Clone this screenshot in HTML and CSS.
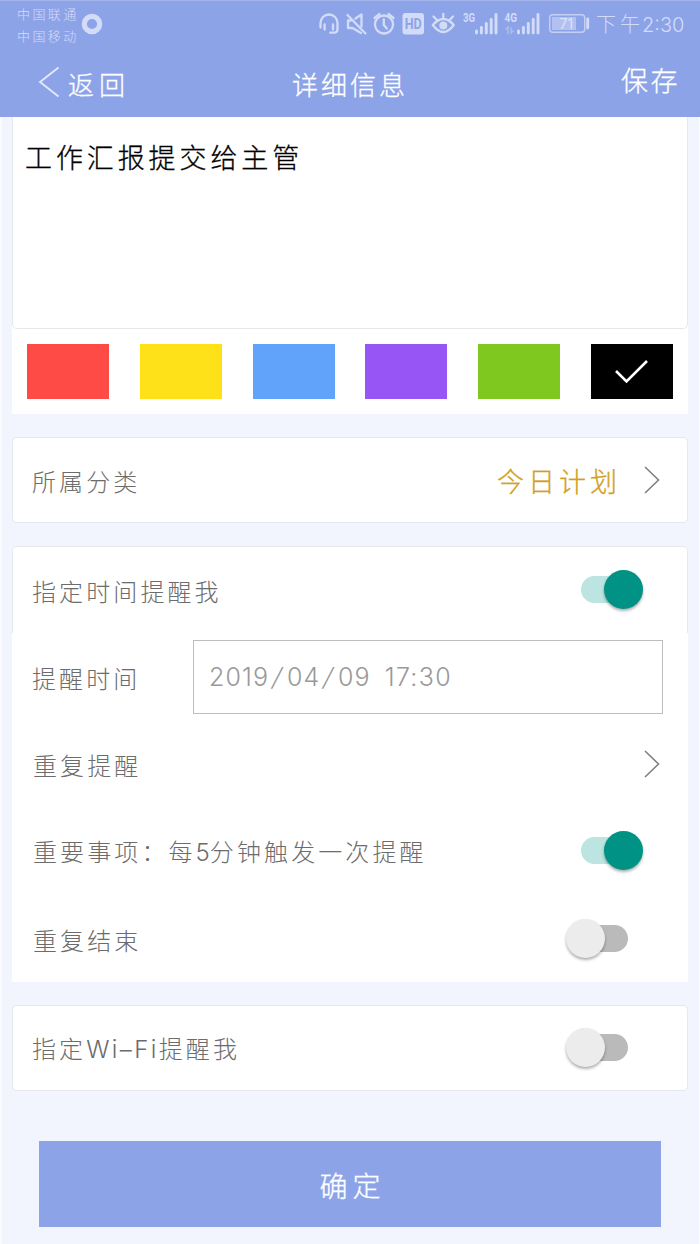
FILE: index.html
```html
<!DOCTYPE html>
<html lang="zh-CN">
<head>
<meta charset="utf-8">
<title>详细信息</title>
<link rel="stylesheet" href="styles.css">
</head>
<body>
<header class="top">
  <div class="status">
    <div class="carriers"><span>中国联通</span><span>中国移动</span></div>
    <svg class="ring" width="22" height="22" viewBox="0 0 22 22"><circle cx="11" cy="11" r="7.7"/></svg>
    <svg class="status-icons" width="278" height="36" viewBox="312 6 278 36">
      <g class="line">
        <path d="M320.500 27.500v-4.500a8.500 8.500 0 0 1 17 0v6q0 3.700-3.700 3.700h-3.600M324.600 24.500v5M333 24.500v5"/>
        <path d="M347.500 15l18 18.500M351 20.500h-3v7.500h4.500l8.500 5M355.500 18.500l6-4v12"/>
        <circle cx="384" cy="24.500" r="9"/><path d="M383.800 19.500v5.500l3 3.500M374.500 18l5-4M388.500 14l5 4"/>
        <path d="M432.800 25q10.500-12 21 0q-10.500 14-21 0zM443.300 17.500v-3.500M436.500 19.500l-3-3M450 19.500l3-3"/>
      </g>
      <circle class="fill" cx="443.300" cy="25.500" r="4"/>
      <rect class="fill" x="402.500" y="13" width="21.500" height="21.500" rx="3"/>
      <text class="hd" x="404.700" y="29.200" textLength="17" lengthAdjust="spacingAndGlyphs">HD</text>
      <text class="net" x="463" y="22" textLength="12" lengthAdjust="spacingAndGlyphs">3G</text>
      <text class="net" x="504.500" y="22" textLength="12.500" lengthAdjust="spacingAndGlyphs">4G</text>
      <path class="bars" d="M476.500 31v2M481.400 27.500v5.500M486.300 23.500v9.500M491.200 19.500v13.500M496 14.500v18.500M518.500 31v2M523.400 27.500v5.500M528.300 23.500v9.500M533.200 19.500v13.500M538 14.500v18.500"/>
      <path class="arrows" d="M505.500 29.500l2.500-2.500v7M511 27v6l2.500-2.500"/>
      <rect class="cell" x="549.700" y="14.800" width="35" height="17.500" rx="3"/>
      <rect class="charge" x="552" y="17" width="24" height="13"/>
      <path class="bars" d="M587.700 19v9"/>
      <text class="pct" x="559.500" y="28.500">71</text>
    </svg>
    <div class="clock">下午<span>2:30</span></div>
  </div>
  <nav class="nav">
    <div class="back"><svg width="22" height="32" viewBox="0 0 22 32"><path d="M20.500 1.500L2 16l18.500 14.500"/></svg><span>返回</span></div>
    <h1 class="title">详细信息</h1>
    <div class="save">保存</div>
  </nav>
</header>
<main class="content">
  <section class="note">工作汇报提交给主管</section>
  <section class="swatches">
    <i class="sw red"></i><i class="sw yellow"></i><i class="sw blue"></i><i class="sw purple"></i><i class="sw green"></i>
    <i class="sw black"><svg width="34" height="26" viewBox="0 0 34 26"><path d="M1 12L11.500 22.500L32 2"/></svg></i>
  </section>
  <section class="card">
    <div class="row"><span class="label">所属分类</span><span class="value">今日计划</span>
      <svg class="chev" width="18" height="30" viewBox="0 0 18 30"><path d="M2 2l13.500 13L2 28"/></svg></div>
  </section>
  <section class="group">
    <div class="row first"><span class="label">指定时间提醒我</span><span class="toggle on"><i></i></span></div>
    <div class="row"><span class="label">提醒时间</span><div class="field"><span>2019<b>/</b>04<b>/</b>09</span><span class="hour">17:30</span></div></div>
    <div class="row"><span class="label in">重复提醒</span>
      <svg class="chev" width="18" height="30" viewBox="0 0 18 30"><path d="M2 2l13.500 13L2 28"/></svg></div>
    <div class="row"><span class="label in">重要事项：每<span class="five">5</span>分钟触发一次提醒</span><span class="toggle on"><i></i></span></div>
    <div class="row"><span class="label in">重复结束</span><span class="toggle"><i></i></span></div>
  </section>
  <section class="card">
    <div class="row"><span class="label">指定<span class="wifi">Wi–Fi</span>提醒我</span><span class="toggle"><i></i></span></div>
  </section>
  <button class="confirm" type="button">确定</button>
</main>
</body>
</html>
```
FILE: styles.css
```css
* { box-sizing: border-box; }
body {
  margin: 0;
  height: 1244px;
  background: #f2f5fe;
  font-family: "Noto Sans CJK SC", sans-serif;
  font-weight: 300;
  color: #6c6c6c;
  overflow: hidden;
}
.top {
  height: 117px;
  background: #8da3e8;
  border-top: 1px solid #a5b6ed;
  color: #fff;
}
.status { height: 46px; display: flex; padding-left: 17px; color: #d3dcf7; }
.carriers {
  display: flex; flex-direction: column; width: 64px; padding-top: 2px;
  font-size: 13px; letter-spacing: 2.4px; line-height: 21.5px; white-space: nowrap;
}
.ring { margin: 12px 0 0 0; }
.ring circle { fill: none; stroke: #d3dcf7; stroke-width: 5.2; }
.status-icons { margin: 5px 0 0 209px; }
.line { fill: none; stroke: #d3dcf7; stroke-width: 2.3; stroke-linecap: round; stroke-linejoin: round; }
.fill { fill: #d3dcf7; }
.bars { fill: none; stroke: #d3dcf7; stroke-width: 2.9; stroke-linecap: round; }
.arrows { fill: none; stroke: #adbdef; stroke-width: 1.5; }
.cell { fill: none; stroke: #c3cff4; stroke-width: 1.4; }
.charge { fill: #b2c1f0; }
.hd { font: 700 15px Roboto, sans-serif; fill: #8da3e8; }
.net { font: 700 12px Roboto, sans-serif; fill: #d3dcf7; }
.pct { font: 400 14px Inter, sans-serif; fill: #dce3f9; }
.clock { padding: 7px 0 0 6px; font-size: 20px; line-height: 32px; letter-spacing: 4px; white-space: nowrap; }
.clock span { font-family: Inter, sans-serif; font-size: 20px; letter-spacing: 0; margin-left: -2px; }
.nav {
  display: grid; grid-template-columns: 1fr 120px 1fr; height: 70px; line-height: 40px;
  -webkit-text-stroke: 0.3px #fff;
}
.back { display: flex; padding: 19px 0 0 38px; font-size: 26px; letter-spacing: 5px; }
.back svg { fill: none; stroke: #e4eafb; stroke-width: 1.8; }
.back span { margin: -2px 0 0 8px; }
.title { margin: 17px 0 0 2px; font-size: 26px; line-height: 40px; font-weight: 300; letter-spacing: 3px; white-space: nowrap; }
.save { padding: 13px 20px 0 0; text-align: right; font-size: 27px; letter-spacing: 2.5px; }
.content {
  height: 1127px;
  padding: 0 11px 0 10px;
  border-left: 2px solid #fafbff;
  border-right: 1px solid #fafbff;
}
.note {
  height: 212px; padding: 20px 12px;
  background: #fff; border: 1px solid #e7e8ed; border-top: 0; border-radius: 0 0 5px 5px;
  box-shadow: 0 5px 0 #fff;
  color: #000; font-size: 27px; line-height: 40px; letter-spacing: 3.9px;
  -webkit-text-stroke: 0.3px #000;
}
.swatches { height: 85px; padding: 15px 15px 0; display: flex; justify-content: space-between; background: #fff; }
.sw { width: 82px; height: 55px; display: flex; align-items: center; justify-content: center; }
.red { background: #ff4b45; }
.yellow { background: #ffe119; }
.blue { background: #61a3fb; }
.purple { background: #9855f6; }
.green { background: #7fc81f; }
.black { background: #000; }
.black svg { fill: none; stroke: #fff; stroke-width: 2.6; }
.card { height: 86px; margin-top: 23px; background: #fff; border: 1px solid #e7e8ed; border-radius: 5px; }
.group { height: 436px; margin-top: 23px; background: #fff; border-radius: 5px 5px 0 0; }
.row { height: 87.25px; display: flex; align-items: center; padding: 0 25px 0 20px; }
.card .row { height: 84px; padding: 0 24px 0 19px; }
.first { border: 1px solid #e7e8ed; border-bottom: 0; border-radius: 5px 5px 0 0; }
.row.first { padding: 0 24px 0 19px; }
.label { font-size: 24px; line-height: 36px; letter-spacing: 3.1px; margin-top: 2px; white-space: nowrap; }
.in { padding-left: 1px; }
.five { font-family: Inter, sans-serif; letter-spacing: 0; }
.wifi { font-family: Inter, sans-serif; font-size: 24px; letter-spacing: 2.4px; }
.value { margin: 2px 22px 0 auto; color: #d2a020; font-size: 27px; line-height: 40px; letter-spacing: 4px; -webkit-text-stroke: 0.3px #d2a020; }
.chev { margin-right: 2px; fill: none; stroke: #808080; stroke-width: 1.6; }
.label + .chev { margin-left: auto; }
.field {
  width: 470px; height: 74px; margin-left: auto; padding-left: 15px;
  display: flex; align-items: center; border: 1px solid #bdbdbd;
  font: 300 25px Inter, sans-serif; letter-spacing: 1.1px; color: #999;
}
.field b { display: inline-block; margin: 0 4px; font-weight: 300; transform: skewX(-14deg); }
.hour { margin-left: 14px; letter-spacing: 1.3px; }
.toggle { position: relative; width: 46px; height: 27px; margin: -1px 35px 0 auto; border-radius: 14px; background: #bababa; }
.toggle.on { width: 46px; margin-right: 36px; background: #bce4e0; }
.toggle i {
  position: absolute; top: -6px; left: -16px; width: 39px; height: 39px; border-radius: 50%;
  background: #ececec; box-shadow: 0 2px 3px rgba(0, 0, 0, .32);
}
.toggle.on i { left: 23px; background: #009385; }
.confirm {
  display: block; width: 622px; height: 86px; margin: 50px 0 0 27px; padding: 2px 0 0 5px;
  border: 0; background: #8da3e8; color: #fff;
  font: 300 28px "Noto Sans CJK SC", sans-serif; letter-spacing: 5px;
  -webkit-text-stroke: 0.3px #fff;
}
```
